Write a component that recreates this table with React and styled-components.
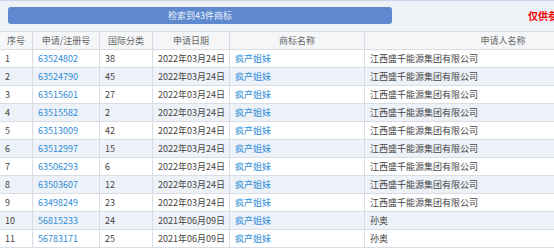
import React from "react";
import styled, { createGlobalStyle } from "styled-components";

const rows = [
  ["1", "63524802", "38", "2022年03月24日", "疯产姐妹", "江西盛千能源集团有限公司"],
  ["2", "63524790", "45", "2022年03月24日", "疯产姐妹", "江西盛千能源集团有限公司"],
  ["3", "63515601", "27", "2022年03月24日", "疯产姐妹", "江西盛千能源集团有限公司"],
  ["4", "63515582", "2", "2022年03月24日", "疯产姐妹", "江西盛千能源集团有限公司"],
  ["5", "63513009", "42", "2022年03月24日", "疯产姐妹", "江西盛千能源集团有限公司"],
  ["6", "63512997", "15", "2022年03月24日", "疯产姐妹", "江西盛千能源集团有限公司"],
  ["7", "63506293", "6", "2022年03月24日", "疯产姐妹", "江西盛千能源集团有限公司"],
  ["8", "63503607", "12", "2022年03月24日", "疯产姐妹", "江西盛千能源集团有限公司"],
  ["9", "63498249", "23", "2022年03月24日", "疯产姐妹", "江西盛千能源集团有限公司"],
  ["10", "56815233", "24", "2021年06月09日", "疯产姐妹", "孙奥"],
  ["11", "56783171", "25", "2021年06月09日", "疯产姐妹", "孙奥"],
];

const headers = ["序号", "申请/注册号", "国际分类", "申请日期", "商标名称", "申请人名称"];

export default function App() {
  return (
    <Page>
      <GlobalStyle />
      <TopBar>
        <SearchButton>检索到43件商标</SearchButton>
        <Notice>仅供参考</Notice>
      </TopBar>
      <Table>
        <HeaderRow>
          {headers.map((h) => (
            <HeadCell key={h}>{h}</HeadCell>
          ))}
        </HeaderRow>
        {rows.map((r, i) => (
          <Row key={r[0]} $even={i % 2 === 1}>
            <Cell>{r[0]}</Cell>
            <Cell>
              <Link>{r[1]}</Link>
            </Cell>
            <Cell>{r[2]}</Cell>
            <Cell>{r[3]}</Cell>
            <Cell>
              <Link>{r[4]}</Link>
            </Cell>
            <Cell>{r[5]}</Cell>
          </Row>
        ))}
      </Table>
    </Page>
  );
}

const GlobalStyle = createGlobalStyle`
  body {
    margin: 0;
    background: #fff;
    font-family: "Noto Sans CJK SC", "Noto Sans", sans-serif;
  }
`;

const Page = styled.div`
  width: 554px;
  overflow: hidden;
`;

const TopBar = styled.div`
  width: 642px;
  height: 31px;
  box-sizing: border-box;
  border-top: 1px solid #c9d6ea;
  background: #eef2f7;
  display: flex;
  align-items: center;
  padding-left: 8px;
  padding-bottom: 1px;
`;

const SearchButton = styled.div`
  width: 384px;
  height: 17px;
  border-radius: 3px;
  background: #5e89cf;
  color: #eef3fb;
  font-size: 9px;
  display: flex;
  align-items: center;
  justify-content: center;
`;

const Notice = styled.span`
  margin-left: 136px;
  color: #f00000;
  font-size: 10px;
  font-weight: bold;
  white-space: nowrap;
`;

const cols = "33px 67px 53px 77px 135px 277px";

const Table = styled.div`
  width: 642px;
  border-top: 1px solid #d9dde3;
`;

const HeaderRow = styled.div`
  display: grid;
  grid-template-columns: ${cols};
  height: 18px;
  box-sizing: border-box;
  border-bottom: 1px solid #d9dde3;
  background: #f5f6f8;
`;

const HeadCell = styled.div`
  display: flex;
  align-items: center;
  justify-content: center;
  border-right: 1px solid #d9dde3;
  color: #666;
  font-size: 9px;
  white-space: nowrap;
`;

const Row = styled.div`
  display: grid;
  grid-template-columns: ${cols};
  height: 18px;
  box-sizing: border-box;
  border-bottom: 1px solid #d9dde3;
  background: ${(p) => (p.$even ? "#edf2f8" : "#fff")};
`;

const Cell = styled.div`
  display: flex;
  align-items: center;
  padding-left: 5px;
  border-right: 1px solid #d9dde3;
  color: #444;
  font-size: 9px;
  white-space: nowrap;
  overflow: hidden;
`;

const Link = styled.span`
  color: #2f8cd6;
`;
